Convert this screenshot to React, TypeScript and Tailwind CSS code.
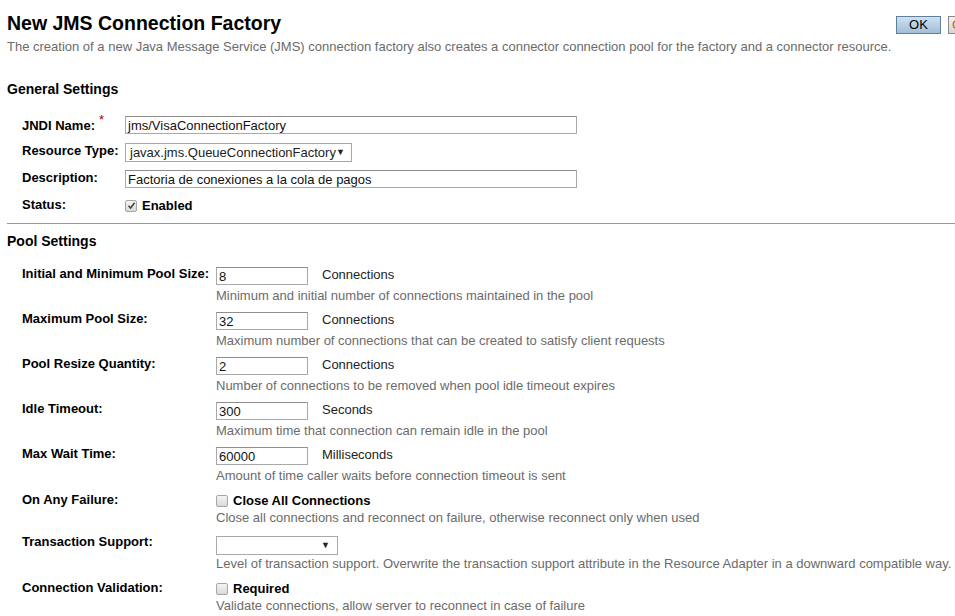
import type { ReactNode } from "react";

function Check({ checked }: { checked?: boolean }) {
  return (
    <span className="inline-flex h-[12px] w-[12px] shrink-0 items-center justify-center rounded-[2px] border border-[#a6a6a6] bg-gradient-to-b from-[#f4f4f4] to-[#d9d9d9]">
      {checked && (
        <svg width="9" height="9" viewBox="0 0 9 9">
          <path d="M1.5 4.8 L3.6 7 L7.6 1.8" fill="none" stroke="#444" strokeWidth="1.6" />
        </svg>
      )}
    </span>
  );
}

function Field({ value, w }: { value: string; w: string }) {
  return (
    <div
      className={`${w} h-[18px] border border-[#a9a9a9] border-t-[#8e8e8e] bg-white pl-[2px] text-[13px] leading-[17px] text-[#111]`}
    >
      {value}
    </div>
  );
}

function Select({ value, w }: { value: string; w: string }) {
  return (
    <div
      className={`${w} flex h-[19px] items-center justify-between border border-[#a9a9a9] bg-white pl-[4px] pr-[7px] text-[13px] text-[#222]`}
    >
      <span>{value}</span>
      <span className="text-[9px] leading-none text-[#222]">▼</span>
    </div>
  );
}

function Help({ children }: { children: ReactNode }) {
  return <div className="whitespace-nowrap text-[13px] leading-4 text-[#6b6b6b]">{children}</div>;
}

function PoolRow({
  label,
  value,
  unit,
  help,
}: {
  label: string;
  value: string;
  unit: string;
  help: string;
}) {
  return (
    <div className="mb-[7px] flex pl-[15px]">
      <div className="w-[194px] shrink-0 text-[13px] font-bold leading-4">{label}</div>
      <div>
        <div className="flex h-[22px] items-start pt-[1px]">
          <Field value={value} w="w-[92px]" />
          <span className="ml-[14px] text-[13px] leading-4 text-[#222]">{unit}</span>
        </div>
        <Help>{help}</Help>
      </div>
    </div>
  );
}

function CheckRow({ label, text, help }: { label: string; text: string; help: string }) {
  return (
    <div className="mb-[8px] flex pl-[15px] pt-[1px]">
      <div className="w-[194px] shrink-0 text-[13px] font-bold leading-4">{label}</div>
      <div>
        <div className="flex h-[18px] items-center gap-[5px] pb-[1px]">
          <Check />
          <span className="text-[13px] font-bold leading-4">{text}</span>
        </div>
        <Help>{help}</Help>
      </div>
    </div>
  );
}

export default function App() {
  return (
    <div className="h-[616px] w-[955px] overflow-hidden bg-white font-['Liberation_Sans',Arial,sans-serif] text-black">
      {/* header */}
      <div className="flex items-start justify-between pl-[7px] pt-[12px]">
        <h1 className="text-[19.5px] font-bold leading-[22px]">New JMS Connection Factory</h1>
        <div className="mt-[4px] flex shrink-0 gap-[7px] -mr-[45px]">
          <button className="h-[18px] w-[45px] border border-[#5f7f9b] bg-gradient-to-b from-[#cfe1ef] to-[#a0bfd8] text-[13px] leading-[16px] text-black">
            OK
          </button>
          <button className="h-[18px] w-[52px] border border-[#8a8a8a] bg-gradient-to-b from-[#f2f2f2] to-[#d5d5d5] px-[3px] text-left text-[13px] leading-[16px] text-[#b5651d]">
            Cancel
          </button>
        </div>
      </div>
      <p className="mt-[5px] whitespace-nowrap pl-[7px] text-[13px] leading-4 text-[#6b6b6b]">
        The creation of a new Java Message Service (JMS) connection factory also creates a connector
        connection pool for the factory and a connector resource.
      </p>

      {/* general settings */}
      <h2 className="mt-[26px] pl-[7px] text-[14px] font-bold leading-[17px]">General Settings</h2>
      <div className="mt-[18px]">
        <div className="flex h-[25px] pl-[22px]">
          <div className="w-[103px] shrink-0 pt-[2px] text-[13px] font-bold leading-4">
            JNDI Name:
            <sup className="ml-[4px] text-[13px] font-normal text-[#b00000]">*</sup>
          </div>
          <Field value="jms/VisaConnectionFactory" w="w-[452px]" />
        </div>
        <div className="flex h-[27px] pl-[22px]">
          <div className="w-[103px] shrink-0 pt-[2px] text-[13px] font-bold leading-4">Resource Type:</div>
          <div className="pt-[2px]">
            <Select value="javax.jms.QueueConnectionFactory" w="w-[227px]" />
          </div>
        </div>
        <div className="flex h-[28px] pl-[22px]">
          <div className="w-[103px] shrink-0 pt-[2px] text-[13px] font-bold leading-4">Description:</div>
          <div className="pt-[2px]">
            <Field value="Factoria de conexiones a la cola de pagos" w="w-[452px]" />
          </div>
        </div>
        <div className="flex h-[18px] pl-[22px]">
          <div className="w-[103px] shrink-0 pt-[1px] text-[13px] font-bold leading-4">Status:</div>
          <div className="flex items-center gap-[5px] pt-[1px]">
            <Check checked />
            <span className="text-[13px] font-bold leading-4">Enabled</span>
          </div>
        </div>
      </div>

      <hr className="ml-[7px] mt-[9px] border-0 border-t border-[#8d9ba6]" />

      {/* pool settings */}
      <h2 className="mt-[9px] pl-[7px] text-[14px] font-bold leading-[17px]">Pool Settings</h2>
      <div className="mt-[16px] pl-[7px]">
        <PoolRow
          label="Initial and Minimum Pool Size:"
          value="8"
          unit="Connections"
          help="Minimum and initial number of connections maintained in the pool"
        />
        <PoolRow
          label="Maximum Pool Size:"
          value="32"
          unit="Connections"
          help="Maximum number of connections that can be created to satisfy client requests"
        />
        <PoolRow
          label="Pool Resize Quantity:"
          value="2"
          unit="Connections"
          help="Number of connections to be removed when pool idle timeout expires"
        />
        <PoolRow
          label="Idle Timeout:"
          value="300"
          unit="Seconds"
          help="Maximum time that connection can remain idle in the pool"
        />
        <PoolRow
          label="Max Wait Time:"
          value="60000"
          unit="Milliseconds"
          help="Amount of time caller waits before connection timeout is sent"
        />
        <CheckRow
          label="On Any Failure:"
          text="Close All Connections"
          help="Close all connections and reconnect on failure, otherwise reconnect only when used"
        />
        <div className="mb-[7px] flex pl-[15px]">
          <div className="w-[194px] shrink-0 text-[13px] font-bold leading-4">Transaction Support:</div>
          <div>
            <div className="h-[22px] pt-[2px]">
              <Select value="" w="w-[122px]" />
            </div>
            <Help>
              Level of transaction support. Overwrite the transaction support attribute in the
              Resource Adapter in a downward compatible way.
            </Help>
          </div>
        </div>
        <CheckRow
          label="Connection Validation:"
          text="Required"
          help="Validate connections, allow server to reconnect in case of failure"
        />
      </div>
    </div>
  );
}
